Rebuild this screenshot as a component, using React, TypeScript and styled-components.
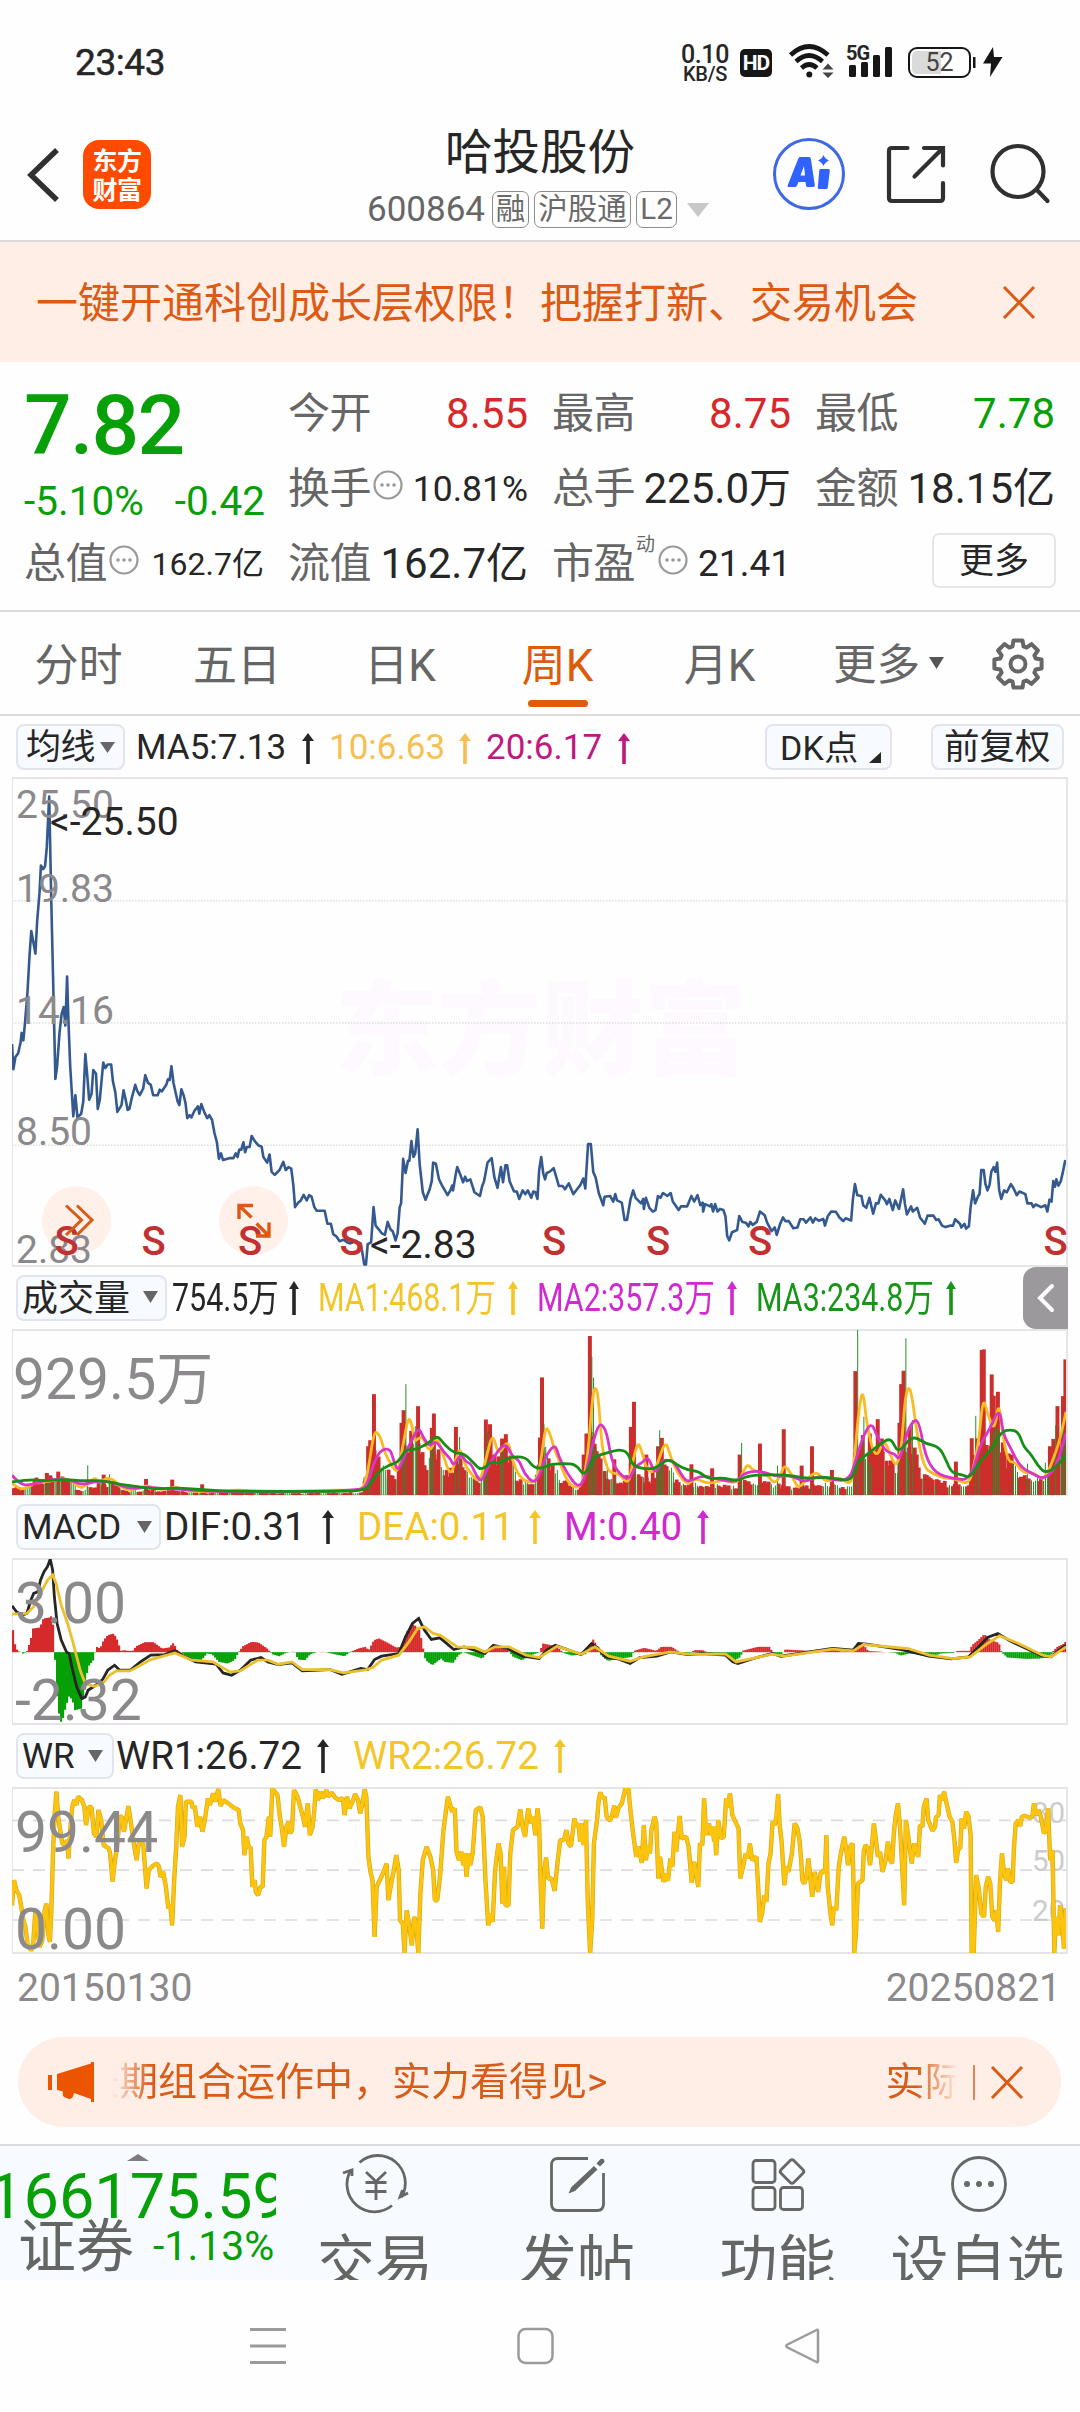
import React from "react";
import styled, { createGlobalStyle } from "styled-components";

const GREEN = "#08a008";
const RED = "#d7292b";
const ORANGE = "#dc5a13";
const INK = "#262626";
const GREY = "#666666";
const YELLOW = "#f3c527";
const MAGENTA = "#d029d0";

const GlobalStyle = createGlobalStyle`
  html, body { margin: 0; padding: 0; background: #fefefe; }
  *, *::before, *::after { box-sizing: border-box; }
  body { font-family: Roboto, "Noto Sans CJK SC", sans-serif; color: ${INK}; }
`;

const Screen = styled.div`
  width: 1080px;
  height: 2412px;
  display: flex;
  flex-direction: column;
  overflow: hidden;
  background: #fefefe;
`;

/* ---------- shared text ---------- */

const Text = styled.span<{ $size: number; $color?: string; $weight?: number; $ls?: number; $ml?: number; $dy?: number }>`
  display: block;
  flex: none;
  white-space: nowrap;
  line-height: 1;
  font-size: ${(p) => p.$size}px;
  color: ${(p) => p.$color || INK};
  font-weight: ${(p) => p.$weight || 400};
  letter-spacing: ${(p) => p.$ls || 0}px;
  margin-left: ${(p) => p.$ml || 0}px;
  margin-top: ${(p) => p.$dy || 0}px;
`;

const Glyph = styled.svg<{ $ml?: number; $mt?: number }>`
  display: block;
  flex: none;
  overflow: visible;
  margin-left: ${(p) => p.$ml || 0}px;
  margin-top: ${(p) => p.$mt || 0}px;
`;

const DownTriangle = ({ w, h, ml, color = GREY, mt = 0 }: { w: number; h: number; ml: number; color?: string; mt?: number }) => (
  <Glyph $ml={ml} $mt={mt} width={w} height={h} viewBox={`0 0 ${w} ${h}`}>
    <polygon points={`0,0 ${w},0 ${w / 2},${h}`} fill={color} />
  </Glyph>
);

/* ---------- status bar ---------- */

const StatusBar = styled.div`
  height: 100px;
  flex: none;
  display: flex;
  align-items: flex-start;
  padding: 45px 0 0 75px;
`;

const Clock = styled.div`
  width: 607px;
  font-size: 37px;
  line-height: 36px;
  font-weight: 400;
  letter-spacing: -0.4px;
  -webkit-text-stroke: 0.5px ${INK};
`;

const NetSpeed = styled.div`
  width: 46px;
  margin-top: -3px;
  display: flex;
  flex-direction: column;
  align-items: center;
`;

const HdBadge = styled.div`
  width: 32px;
  height: 28px;
  margin: 4px 0 0 12px;
  border-radius: 5px;
  background: #161616;
  color: #fff;
  font-size: 21px;
  font-weight: 700;
  line-height: 29px;
  letter-spacing: -1px;
  text-align: center;
`;

const Signal = styled.div`
  position: relative;
  width: 48px;
  height: 33px;
  margin-left: 13px;
`;

const SignalTag = styled.span`
  position: absolute;
  left: 0;
  top: -1px;
  font-size: 20px;
  line-height: 18px;
  font-weight: 700;
  letter-spacing: -1px;
`;

const Battery = styled.div`
  width: 63px;
  height: 31px;
  margin: 2px 0 0 14px;
  border: 2.5px solid #161616;
  border-radius: 9px;
  padding: 2px;
`;

const BatteryFill = styled.div`
  height: 100%;
  border-radius: 5px;
  background: linear-gradient(90deg, #dadada 52%, transparent 52%);
  color: #444;
  font-size: 25px;
  line-height: 23px;
  text-align: center;
`;

const Status = () => (
  <StatusBar>
    <Clock>23:43</Clock>
    <NetSpeed>
      <Text $size={25} $weight={500} $ls={-0.400}>0.10</Text>
      <Text $size={20} $weight={500} $dy={-3} $ls={-0.300}>KB/S</Text>
    </NetSpeed>
    <HdBadge>HD</HdBadge>
    <Glyph $ml={17} width="44" height="34" viewBox="0 0 44 34" fill="none" stroke="#161616">
      <path d="M1.500 10 Q20 -7 39 10" strokeWidth="4.600" />
      <path d="M7 16.500 Q20 4.500 33.500 16.500" strokeWidth="4.600" />
      <path d="M12.500 23 Q20 16 28 23" strokeWidth="4.600" />
      <circle cx="20.300" cy="29.500" r="3" fill="#161616" stroke="none" />
      <path d="M33.500 24.500 L39 18.500 L44.500 24.500 Z M33.500 27.500 L39 33 L44.500 27.500 Z" fill="#444" stroke="none" />
    </Glyph>
    <Signal>
      <SignalTag>5G</SignalTag>
      <Glyph width="48" height="33" viewBox="0 0 48 33" fill="#161616">
        <rect x="3" y="20" width="7" height="12" rx="1.500" />
        <rect x="15" y="17" width="7" height="15" rx="1.500" />
        <rect x="27" y="10" width="7" height="22" rx="1.500" />
        <rect x="39" y="2" width="7" height="30" rx="1.500" />
      </Glyph>
    </Signal>
    <Battery>
      <BatteryFill>52</BatteryFill>
    </Battery>
    <Glyph $ml={2} $mt={2} width="32" height="30" viewBox="0 0 32 30" fill="#161616">
      <rect x="0" y="10" width="2.500" height="11" />
      <path d="M20 0 L10 16.500 H18 L17 30 L29.500 10 H21 Z" />
    </Glyph>
  </StatusBar>
);

/* ---------- title bar ---------- */

const Header = styled.header`
  height: 142px;
  flex: none;
  display: flex;
  border-bottom: 2px solid #dcdadc;
`;

const BrandLogo = styled.div`
  width: 68px;
  height: 69px;
  margin: 40px 0 0 24px;
  padding-top: 5px;
  border-radius: 16px;
  background: #ff4a00;
  color: #fff;
  font-size: 25px;
  font-weight: 700;
  line-height: 29px;
  letter-spacing: -0.5px;
  text-align: center;
  font-family: "Noto Sans CJK SC", sans-serif;
`;

const TitleBlock = styled.div`
  width: 345px;
  margin-left: 216px;
  display: flex;
  flex-direction: column;
`;

const CodeLine = styled.div`
  display: flex;
  align-items: center;
  height: 38px;
  margin-top: 13px;
`;

const Tag = styled.span<{ $w: number; $ml?: number }>`
  width: ${(p) => p.$w}px;
  height: 37px;
  margin-left: ${(p) => p.$ml ?? 5}px;
  border: 1.500px solid #8c8c8c;
  border-radius: 7px;
  font-size: 29.500px;
  line-height: 35px;
  color: #6a6a6a;
  display: flex;
  justify-content: center;
  white-space: nowrap;
`;

const AiButton = styled.div`
  position: relative;
  width: 72px;
  height: 72px;
  margin: 38px 0 0 61px;
  border: 3px solid #3f68e8;
  border-radius: 50%;
`;

const TitleBar = () => (
  <Header>
    <Glyph $ml={28} $mt={48} width="31" height="54" viewBox="0 0 31 54" fill="none" stroke="#303030" strokeWidth="5.500">
      <path d="M29 2 L3 27 L29 52" />
    </Glyph>
    <BrandLogo>
      东方
      <br />
      财富
    </BrandLogo>
    <TitleBlock>
      <Text $size={47.500} $ml={78} $dy={30}>哈投股份</Text>
      <CodeLine>
        <Text $size={35} $color={GREY}>600864</Text>
        <Tag $w={37} $ml={7}>融</Tag>
        <Tag $w={97}>沪股通</Tag>
        <Tag $w={41}>L2</Tag>
        <DownTriangle w={22} h={14} ml={10} color="#c8c8c8" />
      </CodeLine>
    </TitleBlock>
    <AiButton>
      <Glyph width="66" height="66" viewBox="0 0 66 66" fill="#2f62ff">
        <path d="M47.500 14 Q49 18 53 19.500 Q49 21 47.500 25 Q46 21 42 19.500 Q46 18 47.500 14Z" />
        <path d="M44 28 h8.500 q1.500 0 1.300 1.500 l-2 17 q-.2 1.500-1.700 1.500 h-7 q-1.500 0-1.300-1.500 l1.500-17 q.2-1.500 .7-1.500Z" />
        <path fillRule="evenodd" d="M24 16 h9 q1.500 0 1.800 1.500 l4 26.500 q.3 2-1.600 2 h-5.500 q-1.500 0-1.700-1.500 l-.5-3.500 h-7 l-1.500 3.500 q-.7 1.500-2 1.500 h-6 q-2 0-1.200-2 l10.500-26.500 q.6-1.500 1.700-1.500Z M28 25 l-3.500 9.500 h4.500Z" />
      </Glyph>
    </AiButton>
    <Glyph $ml={42} $mt={45} width="59" height="59" viewBox="0 0 59 59" fill="none" stroke="#303030" strokeWidth="4.200" strokeLinecap="round">
      <path d="M20.500 3 H5 Q2 3 2 6 V53 Q2 56 5 56 H53 Q56 56 56 53 V38" strokeLinejoin="round" />
      <path d="M37 3 H56 V20.500 M55 4 L27.500 31.500" />
    </Glyph>
    <Glyph $ml={43} $mt={44} width="62" height="60" viewBox="0 0 62 60" fill="none" stroke="#303030" strokeWidth="4.200" strokeLinecap="round">
      <circle cx="29" cy="27.500" r="25.500" />
      <path d="M48 46 L58.500 57" />
    </Glyph>
  </Header>
);

/* ---------- orange notice ---------- */

const Notice = styled.div`
  height: 120px;
  flex: none;
  display: flex;
  align-items: center;
  padding: 2px 0 0 36px;
  background: #ffeee6;
`;

const Cross = ({ ml, mt = 0 }: { ml: number; mt?: number }) => (
  <Glyph $ml={ml} $mt={mt} width="32" height="31" viewBox="0 0 32 31" stroke={ORANGE} strokeWidth="3" fill="none">
    <path d="M1 0 L31 31 M31 0 L1 31" />
  </Glyph>
);

/* ---------- quote panel ---------- */

const Quote = styled.section`
  height: 250px;
  flex: none;
  display: grid;
  grid-template-columns: 264px 264px 263px 264px;
  grid-template-rows: 102px 50px 97px;
  border-bottom: 2px solid #dcdadc;
`;

const PriceCell = styled.div`
  grid-row: 1 / 3;
  padding: 22px 0 0 24px;
`;

const ChangeLine = styled.div`
  display: flex;
  justify-content: space-between;
  margin-top: 13px;
  margin-right: -1px;
`;

const Cell = styled.div<{ $top?: number }>`
  display: flex;
  align-items: center;
  height: 50px;
  margin-top: ${(p) => p.$top || 0}px;
  padding-left: 24px;
`;

const Value = styled.span<{ $size?: number; $color?: string }>`
  margin-left: auto;
  font-size: ${(p) => p.$size || 42}px;
  line-height: 50px;
  color: ${(p) => p.$color || INK};
  white-space: nowrap;
`;

const Superscript = styled.span`
  align-self: flex-start;
  margin: -4px 0 0 1px;
  font-size: 19px;
  line-height: 19px;
  color: ${GREY};
`;

const MoreButton = styled.div`
  width: 124px;
  height: 55px;
  margin-left: auto;
  margin-right: -1px;
  border: 2px solid #e6e6e8;
  border-radius: 7px;
  font-size: 35px;
  line-height: 53px;
  text-align: center;
`;

const Hint = ({ ml = 3 }: { ml?: number }) => (
  <Glyph $ml={ml} $mt={-8} width="30" height="30" viewBox="0 0 30 30" fill="#999">
    <circle cx="15" cy="15" r="13.500" fill="none" stroke="#999" strokeWidth="2.200" />
    <circle cx="9" cy="15" r="1.800" />
    <circle cx="15" cy="15" r="1.800" />
    <circle cx="21" cy="15" r="1.800" />
  </Glyph>
);

const Label = ({ children }: { children: string }) => (
  <Text $size={42} $color={GREY} $ls={-0.500}>{children}</Text>
);

const QuotePanel = () => (
  <Quote>
    <PriceCell>
      <Text $size={84} $weight={500} $color={GREEN} $ls={-1.800}>7.82</Text>
      <ChangeLine>
        <Text $size={40.500} $color={GREEN}>-5.10%</Text>
        <Text $size={40.500} $color={GREEN}>-0.42</Text>
      </ChangeLine>
    </PriceCell>
    <Cell $top={27}>
      <Label>今开</Label>
      <Value $color={RED}>8.55</Value>
    </Cell>
    <Cell $top={27}>
      <Label>最高</Label>
      <Value $color={RED}>8.75</Value>
    </Cell>
    <Cell $top={27}>
      <Label>最低</Label>
      <Value $color={GREEN}>7.78</Value>
    </Cell>
    <Cell>
      <Label>换手</Label>
      <Hint ml={2} />
      <Value $size={35.500}>10.81%</Value>
    </Cell>
    <Cell>
      <Label>总手</Label>
      <Value>225.0万</Value>
    </Cell>
    <Cell>
      <Label>金额</Label>
      <Value>18.15亿</Value>
    </Cell>
    <Cell $top={25}>
      <Label>总值</Label>
      <Hint ml={2} />
      <Value $size={32}>162.7亿</Value>
    </Cell>
    <Cell $top={25}>
      <Label>流值</Label>
      <Value>162.7亿</Value>
    </Cell>
    <Cell $top={25}>
      <Label>市盈</Label>
      <Superscript>动</Superscript>
      <Hint ml={3} />
      <Value $size={37}>21.41</Value>
    </Cell>
    <Cell $top={21}>
      <MoreButton>更多</MoreButton>
    </Cell>
  </Quote>
);

/* ---------- period tabs ---------- */

const TabBar = styled.nav`
  height: 104px;
  flex: none;
  display: flex;
  border-bottom: 2px solid #dcdadc;
`;

const Tab = styled.div<{ $w: number; $active?: boolean }>`
  width: ${(p) => p.$w}px;
  display: flex;
  flex-direction: column;
  align-items: center;
  font-size: 44px;
  line-height: 108px;
  height: 102px;
  color: ${(p) => (p.$active ? "#de5a0c" : GREY)};
  &::after {
    content: "";
    width: 60px;
    height: 7px;
    margin-top: -20px;
    border-radius: 4px;
    background: ${(p) => (p.$active ? "#de5a0c" : "transparent")};
    flex: none;
  }
`;

const TabMore = styled.div`
  display: flex;
  align-items: center;
  width: 185px;
  height: 108px;
  padding-left: 26px;
`;

const tabs = [
  { label: "分时", w: 157 },
  { label: "五日", w: 160 },
  { label: "日K", w: 166 },
  { label: "周K", w: 149, active: true },
  { label: "月K", w: 175 },
];

const gearPath = (() => {
  const pts: string[] = [];
  for (let i = 0; i < 8; i++) {
    const a = (i * Math.PI) / 4 - Math.PI / 2;
    const at = (r: number, d: number) => `${(26 + r * Math.cos(a + d)).toFixed(1)},${(26 + r * Math.sin(a + d)).toFixed(1)}`;
    pts.push(at(18.500, -0.300), at(24, -0.190), at(24, 0.190), at(18.500, 0.300));
  }
  return pts.join(" ");
})();

const Tabs = () => (
  <TabBar>
    {tabs.map((t) => (
      <Tab key={t.label} $w={t.w} $active={t.active}>
        {t.label}
      </Tab>
    ))}
    <TabMore>
      <Text $size={43.500} $color={GREY}>更多</Text>
      <DownTriangle w={15} h={12} ml={9} mt={-6} color="#555" />
    </TabMore>
    <Glyph $mt={26} width="52" height="52" viewBox="0 0 52 52" fill="none" stroke={GREY} strokeWidth="4" strokeLinejoin="round">
      <polygon points={gearPath} />
      <circle cx="26" cy="26" r="7.500" />
    </Glyph>
  </TabBar>
);

/* ---------- indicator rows ---------- */

const IndicatorRow = styled.div<{ $h: number; $pt: number }>`
  height: ${(p) => p.$h}px;
  flex: none;
  display: flex;
  align-items: flex-start;
  padding: ${(p) => p.$pt}px 0 0 16px;
`;

const Picker = styled.div<{ $w: number; $h?: number; $pl?: number; $ml?: number }>`
  position: relative;
  width: ${(p) => p.$w}px;
  height: ${(p) => p.$h || 46}px;
  flex: none;
  display: flex;
  align-items: center;
  padding-left: ${(p) => p.$pl ?? 5}px;
  padding-top: 1px;
  margin-left: ${(p) => p.$ml || 0}px;
  border: 2px solid #e3e5ee;
  border-radius: 8px;
  background: #f7faff;
`;

const Reading = styled.div<{ $w: number; $h?: number; $ml?: number; $size: number; $color: string }>`
  width: ${(p) => p.$w}px;
  margin-left: ${(p) => p.$ml || 0}px;
  flex: none;
  height: ${(p) => p.$h || 46}px;
  display: flex;
  align-items: center;
  justify-content: space-between;
  font-size: ${(p) => p.$size}px;
  line-height: ${(p) => p.$h || 46}px;
  color: ${(p) => p.$color};
  white-space: nowrap;
`;

const Squeezed = styled.span<{ $k: number }>`
  width: 0;
  transform: scaleX(${(p) => p.$k});
  transform-origin: left center;
`;

const UpArrow = ({ w = 12, h = 34 }: { w?: number; h?: number }) => (
  <Glyph width={w} height={h} viewBox={`0 0 ${w} ${h}`} fill="currentColor">
    <polygon points={`${w / 2},0 ${w},8 0,8`} />
    <rect x={w / 2 - 1.800} y="6" width="3.600" height={h - 6} />
  </Glyph>
);

const SideTab = styled.div`
  margin-left: auto;
  width: 45px;
  height: 62px;
  margin-right: 12px;
  margin-top: -8px;
  border-radius: 13px 0 0 13px;
  background: #9b999b;
  display: flex;
  align-items: center;
  justify-content: center;
  flex: none;
`;

/* ---------- charts ---------- */

const Frame = styled.div<{ $h: number }>`
  position: relative;
  width: 1056px;
  height: ${(p) => p.$h}px;
  margin-left: 12px;
  flex: none;
  border: 2px solid #e5e5e5;
  border-left-width: 1px;
`;

const Canvas = styled.svg`
  position: absolute;
  left: -1px;
  top: -1px;
  width: 1054px;
  height: calc(100% + 2px);
`;

const Mark = styled.span<{ $x: number; $y: number; $size: number; $color?: string; $weight?: number }>`
  position: absolute;
  left: ${(p) => p.$x}px;
  top: ${(p) => p.$y - 30}px;
  font-size: ${(p) => p.$size}px;
  line-height: 60px;
  color: ${(p) => p.$color || "#8b898b"};
  font-weight: ${(p) => p.$weight || 400};
  white-space: nowrap;
`;

const FloatButton = styled.div<{ $x: number }>`
  position: absolute;
  left: ${(p) => p.$x}px;
  top: 407px;
  width: 69px;
  height: 69px;
  border-radius: 50%;
  background: #fff0ea;
`;

const FloatIcon = styled.svg<{ $x: number }>`
  position: absolute;
  left: ${(p) => p.$x}px;
  top: 407px;
`;

const HALF = 1568;
type Pt = [number, number];

/* Series are stored as "x,y" pairs; the second half restarts its x at zero. */
const series = (a: string, b = ""): Pt[] => {
  const read = (s: string, dx: number) =>
    s.trim().split(/\s+/).filter(Boolean).map((q): Pt => {
      const [x, y] = q.split(",").map(Number);
      return [x + dx, y];
    });
  return [...read(a, 0), ...read(b, HALF)];
};
const line = (pts: Pt[]) => pts.map((p) => p.join(",")).join(" ");
const curve = (pts: Pt[]) => {
  let d = `M${pts[0][0]},${pts[0][1]}`;
  for (let i = 1; i < pts.length - 1; i++) {
    const [x, y] = pts[i];
    const [nx, ny] = pts[i + 1];
    d += ` Q${x},${y} ${(x + nx) / 2},${(y + ny) / 2}`;
  }
  const last = pts[pts.length - 1];
  return `${d} L${last[0]},${last[1]}`;
};
const sample = (pts: Pt[], x: number) => {
  for (let i = 1; i < pts.length; i++) {
    if (x <= pts[i][0]) {
      const [x0, y0] = pts[i - 1];
      const [x1, y1] = pts[i];
      return y0 + ((y1 - y0) * (x - x0)) / (x1 - x0 || 1);
    }
  }
  return pts[pts.length - 1][1];
};

const PRICE = series(
  `37,930 41,998 47,965 55,955 62,925 65,900 70,920 75,870 82,790 88,690 93,625 98,650 105,686 110,600 117,520 121,448 127,458 133,450 138,400 145,262 148,400 151,540 156,740 163,1024 168,990 175,900 181,850 187,830 192,880 197,748 201,870 206,990 215,1125 221,1068 227,1128 238,1118 244,1085 250,957 256,1020 261,1080 268,1065 273,1000 281,1010 286,1105 292,1080 302,980 308,995 315,985 325,985 330,1030 337,1060 343,1113 355,1095 361,1055 366,1075 373,1108 378,1105 385,1075 395,1040 400,1055 408,1068 418,1050 424,1014 432,1035 440,1040 447,1068 460,1068 466,1053 472,1058 485,1040 490,1025 495,1027 500,990 506,1035 512,1060 518,1085 523,1095 529,1052 536,1070 541,1090 546,1130 553,1122 558,1128 567,1110 577,1098 581,1118 587,1092 596,1115 604,1130 610,1122 618,1135 625,1170 632,1195 638,1240 644,1225 650,1243 668,1238 680,1238 687,1225 692,1235 697,1215 703,1215 709,1195 714,1222 719,1208 727,1208 733,1178 742,1192 752,1203 762,1207 767,1235 778,1250 785,1228 791,1275 800,1283 814,1270 825,1248 832,1270 840,1262 848,1266 854,1310 859,1370 868,1358 875,1353 884,1337 893,1352 900,1338 907,1342 915,1370 922,1380 945,1380 953,1415 963,1415 970,1443 980,1450 988,1462 1000,1458 1010,1465 1020,1468 1035,1462 1050,1468 1060,1525 1065,1525 1070,1470 1080,1465 1087,1370 1093,1420 1102,1430 1110,1440 1120,1445 1128,1410 1136,1430 1143,1436 1151,1460 1157,1440 1163,1370 1167,1360 1173,1240 1180,1278 1187,1245 1191,1245 1197,1192 1203,1235 1208,1225 1215,1160 1221,1255 1230,1330 1238,1350 1250,1322 1256,1300 1260,1250 1268,1253 1277,1295 1285,1310 1302,1338 1310,1325 1315,1312 1318,1325 1325,1285 1330,1262 1340,1285 1347,1303 1353,1288 1358,1300 1368,1295 1380,1330 1396,1340 1402,1315 1408,1300 1418,1250 1430,1238 1438,1290 1447,1318 1457,1262 1463,1303 1470,1257 1475,1257 1482,1300 1495,1328 1503,1328 1510,1348 1520,1325 1528,1335 1535,1325 1545,1345 1551,1328 1557,1330 1563,1348`,
  `0,1270 6,1235 12,1280 17,1295 22,1278 30,1275 42,1265 50,1290 57,1313 68,1313 75,1322 86,1306 99,1335 110,1322 120,1310 128,1293 134,1320 142,1200 150,1200 157,1275 164,1290 173,1332 186,1365 190,1342 206,1340 215,1355 221,1335 226,1352 240,1358 248,1405 255,1405 265,1350 273,1325 280,1345 296,1360 302,1348 304,1375 310,1345 320,1372 330,1382 338,1378 345,1340 352,1345 360,1332 372,1340 382,1332 388,1355 405,1378 412,1368 430,1368 442,1340 450,1355 460,1338 468,1365 475,1358 476,1382 482,1362 496,1368 500,1362 505,1382 511,1362 518,1382 525,1375 535,1378 541,1395 546,1448 552,1460 560,1438 575,1432 581,1394 590,1410 600,1412 608,1422 613,1410 620,1418 632,1410 641,1382 655,1392 662,1412 675,1435 684,1425 690,1445 700,1415 708,1398 715,1408 725,1408 738,1427 750,1425 758,1403 768,1403 775,1412 788,1398 795,1412 802,1400 812,1407 825,1402 830,1420 838,1395 848,1382 862,1383 872,1398 883,1408 890,1400 906,1406 911,1350 917,1308 924,1338 936,1340 941,1365 950,1372 959,1345 970,1388 978,1360 985,1360 992,1337 1005,1352 1010,1362 1017,1348 1027,1378 1034,1352 1045,1375 1057,1322 1062,1360 1068,1390 1080,1368 1085,1382 1098,1372 1106,1398 1120,1415 1128,1393 1145,1393 1153,1405 1160,1403 1170,1420 1180,1424 1195,1420 1202,1420 1208,1403 1222,1415 1226,1425 1235,1415 1240,1428 1248,1422 1253,1370 1260,1325 1266,1360 1275,1340 1279,1335 1284,1270 1291,1270 1296,1308 1302,1325 1308,1310 1313,1275 1320,1262 1325,1275 1330,1250 1336,1325 1342,1348 1350,1325 1358,1330 1370,1308 1378,1320 1387,1338 1395,1328 1412,1335 1418,1360 1430,1360 1435,1370 1442,1363 1458,1370 1470,1365 1476,1382 1482,1350 1488,1355 1493,1300 1498,1315 1502,1295 1508,1312 1515,1300 1521,1275 1528,1243`
);

const VOL_BASE = series(
  `37,672 60,685 90,675 100,655 160,650 200,655 230,690 250,680 290,665 330,665 360,690 430,690 500,690 600,697 700,688 800,698 1000,697 1055,695 1065,620 1090,550 1110,620 1150,650 1165,560 1185,500 1210,520 1240,590 1265,540 1300,640 1330,580 1345,620 1370,655 1400,650 1415,520 1440,600 1470,550 1500,650 1550,665 1565,560`,
  `22,590 62,650 112,690 132,650 144,500 162,560 192,640 222,650 242,670 267,600 292,650 322,650 347,600 382,630 412,670 482,670 575,680 592,650 682,670 732,680 832,670 902,680 912,600 932,500 952,560 992,560 1032,620 1052,540 1082,540 1102,620 1132,650 1212,675 1247,675 1252,600 1292,560 1332,500 1357,580 1392,640 1432,650 1472,655 1492,580 1512,520 1530,420`
);

const VOL_RED = series(
  `138,638 148,645 171,634 303,643 426,656 502,658 589,672 1071,558 1077,540 1088,402 1168,488 1174,450 1196,512 1216,438 1256,503 1262,460 1326,500 1413,478 1425,492 1460,535 1471,522`,
  `2,532 8,352 129,583 137,520 147,228 218,597 266,500 275,425 311,583 345,558 356,533 442,612 502,624 582,583 641,550 710,507 762,616 792,558 850,629 918,333 960,520 983,477 995,535 1046,488 1051,372 1058,332 1076,500 1210,604 1256,534 1271,535 1285,270 1291,268 1314,343 1320,407 1332,395 1348,567 1372,583 1483,558 1493,536 1505,438 1521,408 1528,298`
);

const VOL_GREEN = series(
  `257,615 320,642 1059,652 1181,372 1337,530`,
  `14,492 19,560 153,290 158,353 165,560 198,612 350,510 588,548 692,616 925,210 943,470 1065,235 1084,480 1268,467 1418,610 1470,607 1500,495`
);

const bars = (() => {
  const red: React.ReactElement[] = [];
  const green: React.ReactElement[] = [];
  let seed = 17;
  const rnd = () => {
    seed = (seed * 16807) % 2147483647;
    return seed / 2147483647;
  };
  let up = true;
  let run = 6;
  for (let x = 37; x < 3096; x += 5.81) {
    if (run-- <= 0) {
      up = !up;
      run = up ? 1 + Math.floor(rnd() * 5) : Math.floor(rnd() * 4);
    }
    const h = (704 - sample(VOL_BASE, x)) * (0.600 + rnd() * 0.500);
    if (up) red.push(<rect key={x} x={x - 4} y={704 - h} width="11" height={h} />);
    else green.push(<rect key={x} x={x + 2} y={704 - h} width="2.900" height={h} />);
  }
  VOL_RED.forEach(([x, y], i) => red.push(<rect key={`r${i}`} x={x - 5.500} y={y} width="11.500" height={704 - y} />));
  VOL_GREEN.forEach(([x, y], i) => green.push(<rect key={`g${i}`} x={x - 1.500} y={y} width="2.900" height={704 - y} />));
  return { red, green };
})();

const VMA1 = series(
  `37,668 50,680 65,686 80,682 100,668 150,662 180,655 210,658 240,690 275,650 290,665 320,650 350,675 370,690 400,685 430,675 460,688 500,685 510,678 540,690 600,695 700,688 760,695 1000,688 1055,693 1070,640 1088,515 1100,518 1112,545 1120,580 1150,635 1160,625 1175,540 1188,470 1198,490 1206,545 1215,535 1230,530 1250,580 1270,525 1285,570 1310,650 1325,600 1338,560 1350,610 1370,640 1395,670 1415,590 1433,515 1450,590 1477,535 1490,600 1510,650 1540,668 1562,660`,
  `7,590 18,500 29,512 42,560 57,600 82,665 107,685 127,670 142,580 154,420 162,378 171,400 182,560 197,625 212,640 232,640 260,675 272,600 287,545 297,570 312,628 332,638 347,600 367,540 382,590 402,640 432,675 452,652 492,672 532,658 577,670 597,625 607,612 622,632 662,640 682,672 702,645 712,612 732,640 752,688 777,655 807,632 832,668 872,648 902,674 912,640 927,460 940,380 952,500 977,600 1002,535 1022,590 1037,620 1052,570 1062,420 1072,378 1082,400 1097,520 1117,620 1142,640 1182,655 1207,655 1247,674 1262,620 1277,540 1289,410 1302,460 1322,515 1335,420 1347,530 1362,605 1382,605 1407,640 1432,635 1467,662 1492,600 1512,540 1530,455`
);
const VMA2 = series(
  `37,645 60,672 90,675 130,660 200,655 240,675 280,662 330,665 380,687 430,680 480,685 540,688 650,695 1050,693 1070,670 1090,600 1110,568 1135,565 1145,600 1158,635 1175,590 1195,545 1218,500 1230,530 1250,560 1268,540 1290,575 1310,595 1320,618 1340,580 1355,605 1370,610 1385,645 1400,665 1415,630 1435,590 1470,545 1490,590 1510,600 1525,640 1550,668`,
  `0,650 17,590 46,550 57,590 82,640 112,682 132,660 152,560 172,494 184,494 197,520 210,600 232,640 262,660 277,620 302,605 317,588 337,645 357,600 377,600 392,605 417,650 432,666 472,645 512,655 572,667 592,640 637,630 692,650 732,645 772,667 812,645 852,660 902,660 922,590 942,525 965,486 982,530 1007,575 1032,580 1047,602 1067,520 1087,480 1103,482 1122,590 1152,640 1202,655 1252,660 1282,550 1307,510 1337,440 1347,520 1367,560 1397,620 1432,640 1467,658 1502,620 1530,520`
);
const VMA3 = series(
  `37,665 90,657 130,662 190,657 240,662 300,660 350,672 420,682 460,686 520,682 600,690 700,693 1000,693 1060,690 1080,670 1100,635 1130,615 1160,605 1180,568 1200,570 1240,555 1272,524 1290,550 1320,578 1350,580 1375,605 1400,632 1430,603 1450,612 1480,590 1530,590 1550,620`,
  `7,625 32,612 72,610 107,612 132,650 157,590 182,582 207,575 232,568 257,575 272,620 332,628 352,612 377,596 402,615 432,630 462,632 492,657 532,652 577,662 602,648 652,643 732,645 772,655 832,650 862,655 907,662 922,610 942,590 962,575 992,550 1022,532 1042,580 1072,540 1092,530 1122,550 1162,560 1182,600 1197,637 1232,645 1252,652 1282,600 1312,570 1342,515 1367,508 1392,515 1407,560 1427,580 1452,622 1472,638 1502,620 1530,585`
);

const HIST = series(
  `37,1110 42,1150 50,1172 60,1176 68,1181 78,1172 88,1140 95,1105 115,1102 125,1075 145,1072 150,1065 155,1110 157,1178 162,1230 166,1340 178,1391 190,1340 200,1308 210,1320 216,1350 235,1345 245,1280 255,1220 270,1200 275,1178 280,1160 290,1165 300,1140 312,1125 330,1120 340,1140 350,1172 360,1170 370,1172 385,1172 395,1158 420,1146 445,1146 470,1165 490,1162 503,1148 515,1172 530,1180 560,1200 580,1205 600,1180 615,1182 635,1205 660,1210 680,1200 692,1176 705,1158 730,1145 750,1147 775,1165 790,1182 810,1188 830,1178 855,1174 865,1198 885,1200 900,1182 920,1176 940,1175 970,1182 1000,1188 1015,1176 1040,1165 1060,1160 1070,1170 1085,1140 1100,1135 1120,1145 1150,1162 1165,1160 1180,1115 1200,1092 1218,1110 1228,1165 1235,1200 1255,1215 1280,1195 1290,1205 1315,1208 1330,1185 1345,1176 1370,1185 1400,1195 1415,1175 1430,1155 1450,1160 1475,1170 1490,1190 1515,1200 1540,1185 1567,1176`,
  `7,1150 47,1158 67,1178 92,1186 132,1182 142,1165 154,1138 167,1160 177,1185 197,1202 232,1195 267,1190 272,1172 302,1163 322,1168 337,1172 352,1160 382,1160 407,1178 432,1184 447,1170 472,1170 492,1180 532,1180 547,1192 562,1202 582,1190 587,1172 632,1160 667,1160 677,1182 702,1182 712,1168 782,1172 852,1162 872,1174 912,1172 922,1152 942,1158 952,1172 1032,1178 1047,1186 1072,1180 1112,1182 1132,1192 1162,1180 1202,1178 1212,1172 1247,1172 1254,1155 1272,1140 1290,1122 1307,1140 1332,1148 1340,1176 1357,1192 1412,1196 1452,1195 1482,1185 1492,1170 1502,1160 1522,1150 1530,1137`
);
const DIF = series(
  `37,1037 50,1055 65,1065 80,1060 92,1020 100,1000 112,995 120,960 130,935 140,920 148,897 155,930 160,1010 168,1090 180,1140 195,1175 203,1180 212,1225 225,1280 240,1315 250,1310 258,1290 280,1275 300,1258 315,1230 335,1215 350,1230 380,1230 410,1205 440,1185 480,1183 510,1172 540,1190 570,1205 630,1212 650,1238 675,1245 700,1230 730,1200 760,1192 780,1205 810,1213 850,1208 880,1232 960,1228 995,1242 1050,1225 1070,1228 1090,1198 1110,1188 1160,1180 1180,1130 1200,1090 1218,1075 1235,1110 1255,1138 1280,1133 1320,1168 1350,1160 1410,1180 1435,1155 1475,1165 1520,1188`,
  `0,1195 22,1170 47,1155 122,1183 152,1150 172,1165 192,1190 232,1197 264,1210 292,1192 342,1188 382,1175 432,1183 472,1180 542,1185 562,1205 577,1210 632,1192 677,1180 702,1188 852,1165 912,1170 927,1150 952,1152 1052,1168 1132,1188 1197,1196 1247,1190 1272,1165 1302,1132 1332,1120 1367,1142 1462,1188 1487,1190 1507,1172 1530,1155`
);
const DEA = series(
  `37,1062 80,1060 100,1040 120,1000 140,960 155,945 165,970 180,1035 200,1095 215,1150 235,1230 250,1270 275,1278 300,1270 320,1245 340,1232 380,1232 440,1198 510,1178 560,1200 620,1205 670,1235 700,1232 750,1200 780,1200 810,1212 850,1205 880,1228 960,1228 1000,1238 1060,1230 1085,1222 1110,1200 1160,1185 1190,1145 1215,1105 1235,1100 1260,1120 1280,1125 1330,1160 1380,1162 1410,1175 1440,1160 1480,1160 1530,1185`,
  `0,1192 52,1158 122,1182 162,1160 202,1188 264,1203 302,1190 382,1175 432,1182 542,1182 572,1205 677,1182 712,1188 852,1167 912,1172 942,1153 1072,1165 1132,1185 1202,1195 1252,1190 1302,1150 1337,1127 1392,1150 1462,1185 1487,1190 1530,1160`
);

const WR = series(
  `37,555 43,480 50,510 58,525 64,560 70,600 76,620 82,670 92,690 98,680 105,570 110,620 117,680 125,660 132,570 137,550 142,640 147,665 151,580 156,400 161,280 166,215 171,290 177,330 183,370 190,375 197,360 201,415 206,330 212,260 218,240 224,255 229,230 240,240 247,260 252,315 260,260 268,262 275,340 282,350 288,270 296,300 303,375 318,385 322,400 329,485 336,420 342,380 350,290 356,290 362,335 368,300 375,258 384,320 392,380 399,420 405,370 418,370 423,440 428,505 434,450 445,438 458,430 464,440 468,470 476,455 484,500 491,565 497,555 502,615 508,480 514,380 519,260 526,225 531,380 538,350 542,245 558,245 562,265 568,258 575,320 583,290 590,335 597,300 606,235 612,255 621,220 628,245 636,207 643,258 650,240 665,250 680,262 695,270 700,310 708,330 712,405 718,350 726,385 730,380 735,500 742,480 745,515 752,525 758,500 765,500 770,360 776,350 783,290 787,350 793,205 800,215 808,225 815,290 820,320 827,380 834,320 840,305 845,340 850,330 856,210 866,230 874,260 882,290 888,320 896,250 902,345 910,320 915,270 919,208 926,240 933,215 940,235 950,210 955,230 965,218 975,232 985,240 998,235 1003,285 1010,230 1017,265 1028,240 1033,222 1042,240 1048,280 1055,250 1061,208 1066,230 1072,410 1078,455 1084,480 1090,650 1096,500 1105,480 1112,465 1125,430 1130,540 1140,480 1146,450 1153,405 1160,450 1164,600 1172,610 1177,698 1183,570 1190,610 1198,675 1205,590 1210,605 1217,698 1223,520 1230,420 1241,380 1252,410 1260,450 1265,540 1272,540 1280,470 1290,330 1303,230 1315,275 1323,265 1328,395 1335,420 1342,395 1348,435 1352,400 1357,470 1363,400 1368,435 1375,400 1384,270 1397,262 1404,290 1412,480 1420,615 1427,580 1433,605 1440,450 1450,370 1456,400 1461,550 1466,440 1470,555 1479,555 1484,400 1492,330 1505,320 1513,268 1520,320 1527,350 1536,265 1545,310 1550,290 1557,345 1563,265`,
  `0,310 3,450 9,625 14,460 20,412 26,475 36,475 45,512 53,430 61,360 72,360 79,330 85,370 92,380 97,340 102,295 108,318 114,310 119,365 124,310 129,375 136,300 141,540 148,698 154,600 159,370 168,300 173,240 178,217 184,235 190,230 196,290 206,302 212,285 218,257 223,293 230,265 240,250 250,207 259,207 266,280 274,350 282,410 288,380 298,428 304,315 310,420 316,375 322,400 326,330 335,290 340,310 346,475 351,410 361,485 368,460 374,482 381,415 387,440 393,335 398,395 408,288 414,355 427,350 434,380 443,488 450,425 462,500 467,370 474,375 479,235 485,345 493,310 499,345 504,320 508,365 510,320 514,405 520,300 528,355 536,350 543,235 548,262 554,220 561,285 572,310 579,325 584,475 592,440 600,400 606,415 612,370 619,420 631,410 636,500 641,605 648,575 654,525 660,545 666,430 672,400 678,305 684,315 689,290 694,222 698,310 704,365 712,495 718,440 724,455 734,400 742,310 750,325 756,360 761,420 764,480 770,490 776,470 782,415 788,480 793,530 800,455 810,515 817,460 825,450 830,460 834,345 838,500 846,580 851,615 856,560 863,570 870,440 876,400 886,350 892,390 897,435 903,380 910,370 913,500 915,698 920,640 926,490 939,480 943,390 948,375 955,385 961,435 967,370 972,310 978,360 984,410 990,395 997,455 1006,420 1013,365 1020,420 1025,430 1030,340 1035,290 1042,250 1048,320 1060,555 1065,300 1072,350 1082,430 1089,370 1101,410 1106,315 1113,320 1117,260 1125,235 1130,300 1142,332 1150,320 1152,292 1160,285 1164,225 1170,240 1176,215 1183,250 1192,290 1200,305 1206,360 1211,428 1217,385 1223,385 1227,295 1234,325 1240,275 1247,290 1253,345 1256,698 1262,698 1269,465 1276,500 1284,580 1292,590 1297,500 1304,470 1310,490 1316,590 1322,600 1328,570 1333,635 1338,490 1344,400 1350,460 1356,480 1361,445 1368,485 1375,485 1379,380 1384,310 1392,300 1397,318 1402,290 1410,287 1425,293 1432,290 1437,250 1443,285 1450,270 1457,290 1466,340 1472,330 1478,265 1484,420 1491,390 1496,698 1501,590 1508,645 1513,555 1519,610 1524,685 1528,565`
);

const histBars = (() => {
  const out: React.ReactElement[] = [];
  for (let x = 37; x < 3098; x += 5.81) {
    const y = sample(HIST, x);
    const up = y < 1176;
    out.push(<rect key={x} x={x} y={up ? y : 1176} width="6.200" height={Math.abs(1176 - y)} fill={up ? RED : "#05a005"} />);
  }
  return out;
})();

const thin = { vectorEffect: "non-scaling-stroke" as const, fill: "none" };

const signalX = [54, 141, 237.500, 339, 541.500, 645.500, 747.500, 1043];

const Watermark = styled.span`
  position: absolute;
  left: 322px;
  top: 184px;
  font: 900 103px/120px "Noto Sans CJK SC", sans-serif;
  color: #fdf9fe;
  white-space: nowrap;
`;

const PriceChart = () => (
  <Frame $h={490}>
    <Watermark>东方财富</Watermark>
    <FloatButton $x={29} />
    <FloatButton $x={206} />
    <Canvas viewBox="37 212 3061 1317" preserveAspectRatio="none">
      {[543, 873, 1203].map((y) => (
        <line key={y} x1="37" x2="3098" y1={y} y2={y} stroke="#dedede" strokeWidth="1.500" strokeDasharray="1.500 1.500" {...thin} />
      ))}
      <polyline points={line(PRICE)} stroke="#33598f" strokeWidth="2.600" strokeLinejoin="round" {...thin} />
    </Canvas>
    <Mark $x={3} $y={26} $size={39}>25.50</Mark>
    <Mark $x={3} $y={110} $size={39}>19.83</Mark>
    <Mark $x={3} $y={232} $size={39}>14.16</Mark>
    <Mark $x={3} $y={353} $size={39}>8.50</Mark>
    <Mark $x={3} $y={471} $size={39}>2.83</Mark>
    {signalX.map((x) => (
      <Mark key={x} $x={x - 12.500} $y={463} $size={40} $weight={500} $color="#c23132">S</Mark>
    ))}
    <Mark $x={37} $y={43} $size={39} $color={INK}>&lt;-25.50</Mark>
    <Mark $x={357} $y={466} $size={39} $color={INK}>&lt;-2.83</Mark>
    <FloatIcon $x={29} width="69" height="69" viewBox="0 0 69 69" fill="none" stroke={ORANGE} strokeWidth="3">
      <path d="M24 19.500 L39.500 34 L24 49 M35 19.500 L50 34 L35 49" />
    </FloatIcon>
    <FloatIcon $x={206} width="69" height="69" viewBox="0 0 69 69" fill="none" stroke={ORANGE} strokeWidth="3.400">
      <path d="M34 19.500 H20 V33 M20 19.500 L32.500 31.500" />
      <path d="M37 50 H50 V36.500 M50 50 L37.500 37.500" />
    </FloatIcon>
  </Frame>
);

const VolumeChart = () => (
  <Frame $h={167}>
    <Canvas viewBox="37 210 3061 494" preserveAspectRatio="none">
      <g fill="#cc2f2b">{bars.red}</g>
      <g fill="#2c8a2c">{bars.green}</g>
      <path d={curve(VMA1)} stroke="#fabb22" strokeWidth="2.800" {...thin} />
      <path d={curve(VMA2)} stroke="#d936c8" strokeWidth="2.800" {...thin} />
      <path d={curve(VMA3)} stroke="#178f17" strokeWidth="2.800" {...thin} />
    </Canvas>
    <Mark $x={0} $y={49} $size={57}>929.5万</Mark>
  </Frame>
);

const MacdChart = () => (
  <Frame $h={167}>
    <Canvas viewBox="37 897 3061 494" preserveAspectRatio="none">
      {histBars}
      <polyline points={line(DIF)} stroke="#262626" strokeWidth="2.800" {...thin} />
      <polyline points={line(DEA)} stroke="#ecc02c" strokeWidth="2.800" {...thin} />
    </Canvas>
    <Mark $x={2} $y={44} $size={57}>3.00</Mark>
    <Mark $x={2} $y={141} $size={57}>-2.32</Mark>
  </Frame>
);

const WrChart = () => (
  <Frame $h={167}>
    <Canvas viewBox="37 204 3061 494" preserveAspectRatio="none">
      {[301, 450, 599].map((y) => (
        <line key={y} x1="37" x2="3098" y1={y} y2={y} stroke="#dcdcdc" strokeWidth="1.600" strokeDasharray="12 9" {...thin} />
      ))}
    </Canvas>
    <Mark $x={1019} $y={24} $size={29.500} $color="#cccccc">80</Mark>
    <Mark $x={1019} $y={72} $size={29.500} $color="#cccccc">50</Mark>
    <Mark $x={1019} $y={122} $size={29.500} $color="#cccccc">20</Mark>
    <Canvas viewBox="37 204 3061 494" preserveAspectRatio="none">
      <polyline points={line(WR)} stroke="#d3a81c" strokeWidth="4.400" strokeLinejoin="bevel" {...thin} />
      <polyline points={line(WR)} stroke="#fcc40c" strokeWidth="3.200" strokeLinejoin="bevel" {...thin} />
    </Canvas>
    <Mark $x={2} $y={44} $size={57}>99.44</Mark>
    <Mark $x={2} $y={141} $size={57}>0.00</Mark>
  </Frame>
);

const Dates = styled.div`
  height: 83px;
  flex: none;
  display: flex;
  justify-content: space-between;
  padding: 14px 19px 0 17px;
  font-size: 39px;
  line-height: 40px;
  color: #8b898b;
`;

/* ---------- ticker ---------- */

const Ticker = styled.div`
  width: 1043px;
  height: 90px;
  margin-left: 18px;
  flex: none;
  display: flex;
  align-items: center;
  border-radius: 45px;
  background: #ffeee6;
`;

const TickerText = styled.div`
  width: 850px;
  margin-left: 12px;
  display: flex;
  overflow: hidden;
  color: #d85c18;
  font-size: 39px;
  line-height: 60px;
  white-space: nowrap;
  mask-image: linear-gradient(90deg, transparent 6px, #000 44px, #000 810px, transparent 852px);
`;

const TickerRun = styled.span<{ $ml: number }>`
  flex: none;
  margin-left: ${(p) => p.$ml}px;
`;

const Separator = styled.div`
  width: 2px;
  height: 35px;
  margin-left: 17px;
  background: #dd8458;
`;

/* ---------- bottom bar ---------- */

const BottomBar = styled.div`
  height: 136px;
  margin-top: 17px;
  flex: none;
  display: grid;
  grid-template-columns: 276px 198px 206px 195px 205px;
  border-top: 2px solid #dcdadf;
  background: #f7faff;
  overflow: hidden;
`;

const IndexCell = styled.div`
  overflow: hidden;
  display: flex;
  flex-direction: column;
  align-items: center;
  padding-top: 8px;
`;

const IndexLine = styled.div`
  display: flex;
  align-items: center;
  align-self: flex-start;
  height: 58px;
  margin: -10px 0 0 18px;
`;

const ActionCell = styled.div`
  display: flex;
  flex-direction: column;
  align-items: center;
  padding-top: 8px;
  overflow: hidden;
`;

const ActionLabel = styled.span`
  font-size: 58px;
  line-height: 60px;
  margin-top: 19px;
  color: #646664;
  white-space: nowrap;
`;

const iconProps = { width: 60, height: 60, viewBox: "0 0 60 60", fill: "none", stroke: "#666866", strokeWidth: 2.800 };

const SystemNav = styled.div`
  height: 132px;
  flex: none;
  display: flex;
  align-items: flex-start;
  padding: 47px 0 0 250px;
`;

export default function App() {
  return (
    <>
      <GlobalStyle />
      <Screen>
        <Status />
        <TitleBar />
        <Notice>
          <Text $size={42} $color={ORANGE} $dy={2}>一键开通科创成长层权限！把握打新、交易机会</Text>
          <Cross ml={85} mt={-2} />
        </Notice>
        <QuotePanel />
        <Tabs />

        <IndicatorRow $h={61} $pt={8}>
          <Picker $w={109} $pl={8}>
            <Text $size={35} $ls={-0.500}>均线</Text>
            <DownTriangle w={15} h={11} ml={5} />
          </Picker>
          <Reading $ml={11} $w={178} $size={35} $color={INK} $h={48}>
            MA5:7.13 <UpArrow h={31} />
          </Reading>
          <Reading $ml={15} $w={142} $size={35} $color="#f6bf52" $h={48}>
            10:6.63 <UpArrow h={31} />
          </Reading>
          <Reading $ml={15} $w={144} $size={35} $color="#c0187e" $h={48}>
            20:6.17 <UpArrow h={31} />
          </Reading>
          <Picker $w={127} $ml={135} $pl={13}>
            <Text $size={34} $ls={0.300}>DK点</Text>
            <Glyph $ml={10} $mt={20} width="12" height="11" viewBox="0 0 12 11">
              <polygon points="0,11 12,11 12,0" fill={INK} />
            </Glyph>
          </Picker>
          <Picker $w={133} $ml={39} $pl={11}>
            <Text $size={35.500}>前复权</Text>
          </Picker>
        </IndicatorRow>
        <PriceChart />

        <IndicatorRow $h={62} $pt={8}>
          <Picker $w={151} $pl={4}>
            <Text $size={36}>成交量</Text>
            <DownTriangle w={15} h={12} ml={13} mt={-3} />
          </Picker>
          <Reading $ml={5} $w={127} $size={38} $color={INK}>
            <Squeezed $k={0.8}>754.5万</Squeezed> <UpArrow w={10} />
          </Reading>
          <Reading $ml={19} $w={200} $size={38} $color={YELLOW}>
            <Squeezed $k={0.8}>MA1:468.1万</Squeezed> <UpArrow w={10} />
          </Reading>
          <Reading $ml={19} $w={200} $size={38} $color={MAGENTA}>
            <Squeezed $k={0.8}>MA2:357.3万</Squeezed> <UpArrow w={10} />
          </Reading>
          <Reading $ml={19} $w={200} $size={38} $color="#189418">
            <Squeezed $k={0.8}>MA3:234.8万</Squeezed> <UpArrow w={10} />
          </Reading>
          <SideTab>
            <Glyph width="16" height="28" viewBox="0 0 16 28" fill="none" stroke="#fff" strokeWidth="4" strokeLinecap="round">
              <path d="M14 2 L2 14 L14 26" />
            </Glyph>
          </SideTab>
        </IndicatorRow>
        <VolumeChart />

        <IndicatorRow $h={62} $pt={8}>
          <Picker $w={145} $pl={4}>
            <Text $size={35}>MACD</Text>
            <DownTriangle w={15} h={12} ml={16} mt={-2} />
          </Picker>
          <Reading $ml={3} $w={170} $size={38.600} $color={INK}>
            DIF:0.31 <UpArrow />
          </Reading>
          <Reading $ml={23} $w={184} $size={38.600} $color={YELLOW}>
            DEA:0.11 <UpArrow />
          </Reading>
          <Reading $ml={23} $w={145} $size={38.600} $color={MAGENTA}>
            M:0.40 <UpArrow />
          </Reading>
        </IndicatorRow>
        <MacdChart />

        <IndicatorRow $h={62} $pt={8}>
          <Picker $w={98} $pl={4}>
            <Text $size={35}>WR</Text>
            <DownTriangle w={15} h={12} ml={13} mt={-2} />
          </Picker>
          <Reading $ml={2} $w={213} $size={38.600} $color={INK}>
            WR1:26.72 <UpArrow />
          </Reading>
          <Reading $ml={24} $w={213} $size={38.600} $color={YELLOW}>
            WR2:26.72 <UpArrow />
          </Reading>
        </IndicatorRow>
        <WrChart />

        <Dates>
          <span>20150130</span>
          <span>20250821</span>
        </Dates>

        <Ticker>
          <Glyph $ml={30} width="46" height="40" viewBox="0 0 46 40" fill="#ec5500">
            <rect x="0" y="13" width="4" height="15" />
            <path d="M9 12 L43 1.500 V0 H46 V40 H43 V37 L26 31 Q25 37 21 37 L16 35 Q14 33 15 29.500 L9 28 Z" />
          </Glyph>
          <TickerText>
            <TickerRun $ml={-26}>长期组合运作中，实力看得见&gt;</TickerRun>
            <TickerRun $ml={278}>实际</TickerRun>
          </TickerText>
          <Separator />
          <Cross ml={16} />
        </Ticker>

        <BottomBar>
          <IndexCell>
            <Glyph width="22" height="7" viewBox="0 0 22 7">
              <polygon points="0,7 22,7 11,0" fill="#7d7d7d" />
            </Glyph>
            <Text $size={63} $color={GREEN} $dy={4}>166175.59</Text>
            <IndexLine>
              <Text $size={58} $color="#646664">证券</Text>
              <Text $size={41} $color={GREEN} $ml={19} $dy={-2}>-1.13%</Text>
            </IndexLine>
          </IndexCell>
          <ActionCell>
            <Glyph {...iconProps} $ml={1}>
              <path d="M13.500 8.500 A27.500 27.500 0 0 1 55.500 43" />
              <path d="M46 51.500 A27.500 27.500 0 0 1 5 16" />
              <path d="M-3 19 L6 16 V22 M62 39 L54 43 L56.500 36" />
              <path d="M20 18 L30 27.500 L40 18 M30 27 V46 M19.500 28.500 H40.500 M19.500 37.500 H40.500" />
            </Glyph>
            <ActionLabel>交易</ActionLabel>
          </ActionCell>
          <ActionCell>
            <Glyph {...iconProps}>
              <path d="M41 4.500 H11 Q4.500 4.500 4.500 11 V50 Q4.500 56.500 11 56.500 H50 Q56.500 56.500 56.500 50 V19" />
              <path d="M47 12 L50.500 15.500 L28 37 L21.500 39.500 L24 33.500 Z M49.500 9.500 L53.500 5 Q57.500 4 57.500 8 L53 12.500 Z" fill="#666866" stroke="none" />
            </Glyph>
            <ActionLabel>发帖</ActionLabel>
          </ActionCell>
          <ActionCell>
            <Glyph {...iconProps}>
              <rect x="5" y="6.500" width="22" height="22" rx="3" />
              <rect x="5" y="33.500" width="22" height="22" rx="3" />
              <rect x="32.500" y="33.500" width="22" height="22" rx="3" />
              <rect x="35" y="8.500" width="18" height="18" rx="2.500" transform="rotate(45 44 17.500)" />
            </Glyph>
            <ActionLabel>功能</ActionLabel>
          </ActionCell>
          <ActionCell>
            <Glyph {...iconProps}>
              <circle cx="31" cy="30" r="26.500" />
              <circle cx="19" cy="30" r="3" fill="#666866" stroke="none" />
              <circle cx="31" cy="30" r="3" fill="#666866" stroke="none" />
              <circle cx="43" cy="30" r="3" fill="#666866" stroke="none" />
            </Glyph>
            <ActionLabel>设自选</ActionLabel>
          </ActionCell>
        </BottomBar>

        <SystemNav>
          <Glyph width="36" height="38" viewBox="0 0 36 38" stroke="#9a9a9a" strokeWidth="2.800">
            <path d="M0 2.500 H36 M0 19 H36 M0 35.500 H36" />
          </Glyph>
          <Glyph $ml={231} width="37" height="38" viewBox="0 0 37 38" fill="none" stroke="#9a9a9a" strokeWidth="2.500">
            <rect x="1.500" y="2" width="34" height="34" rx="7" />
          </Glyph>
          <Glyph $ml={231} width="35" height="38" viewBox="0 0 35 38" fill="none" stroke="#9a9a9a" strokeWidth="2.500" strokeLinejoin="round">
            <path d="M31.500 3 Q33 2 33 4 V34 Q33 36 31.500 35 L2.500 20.500 Q0 19 2.500 17.500 Z" />
          </Glyph>
        </SystemNav>
      </Screen>
    </>
  );
}
